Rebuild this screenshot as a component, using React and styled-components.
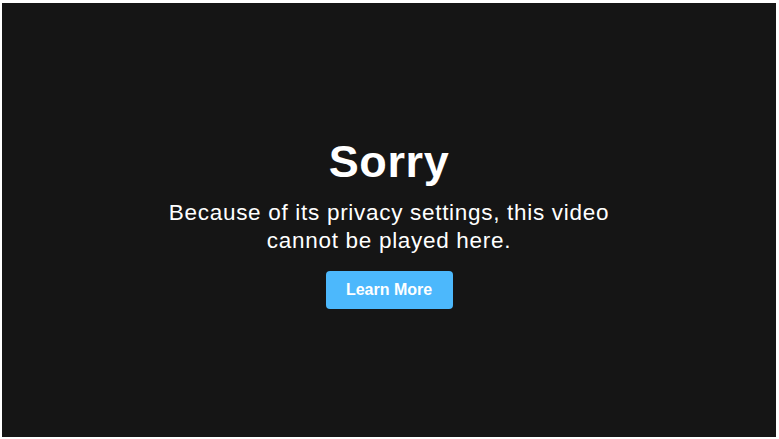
import styled, { createGlobalStyle } from "styled-components";

const GlobalStyle = createGlobalStyle`
    html, body {
        margin: 0;
        padding: 0;
        background: #ffffff;
    }
    body {
        padding: 3px 3px 2px 2px;
        font-family: "Liberation Sans", Arial, Helvetica, sans-serif;
    }
`;

const App = () => {
    return (
        <>
            <GlobalStyle />
            <Player>
                <Message>
                    <Title>Sorry</Title>
                    <Text>Because of its privacy settings, this video cannot be played here.</Text>
                    <LearnButton href="#">Learn More</LearnButton>
                </Message>
            </Player>
        </>
    );
}

const Player = styled.div`
    display: flex;
    align-items: center;
    justify-content: center;
    width: 774px;
    height: 434px;
    background-color: #151515;
    color: #ffffff;
`;

const Message = styled.div`
    display: flex;
    flex-direction: column;
    align-items: center;
    width: 460px;
    text-align: center;
    margin-top: 4px;
`;

const Title = styled.h1`
    margin: 0;
    font-size: 45px;
    font-weight: 700;
    line-height: 52px;
    letter-spacing: 0.6px;
`;

const Text = styled.p`
    margin: 11px 0 0;
    font-size: 22.5px;
    line-height: 28px;
    letter-spacing: 0.7px;
`;

const LearnButton = styled.a`
    display: flex;
    align-items: center;
    justify-content: center;
    margin-top: 16px;
    width: 127px;
    height: 38px;
    border-radius: 4px;
    background-color: #4cb8fc;
    color: #ffffff;
    font-size: 16px;
    font-weight: 700;
    text-decoration: none;
`;

export default App;
